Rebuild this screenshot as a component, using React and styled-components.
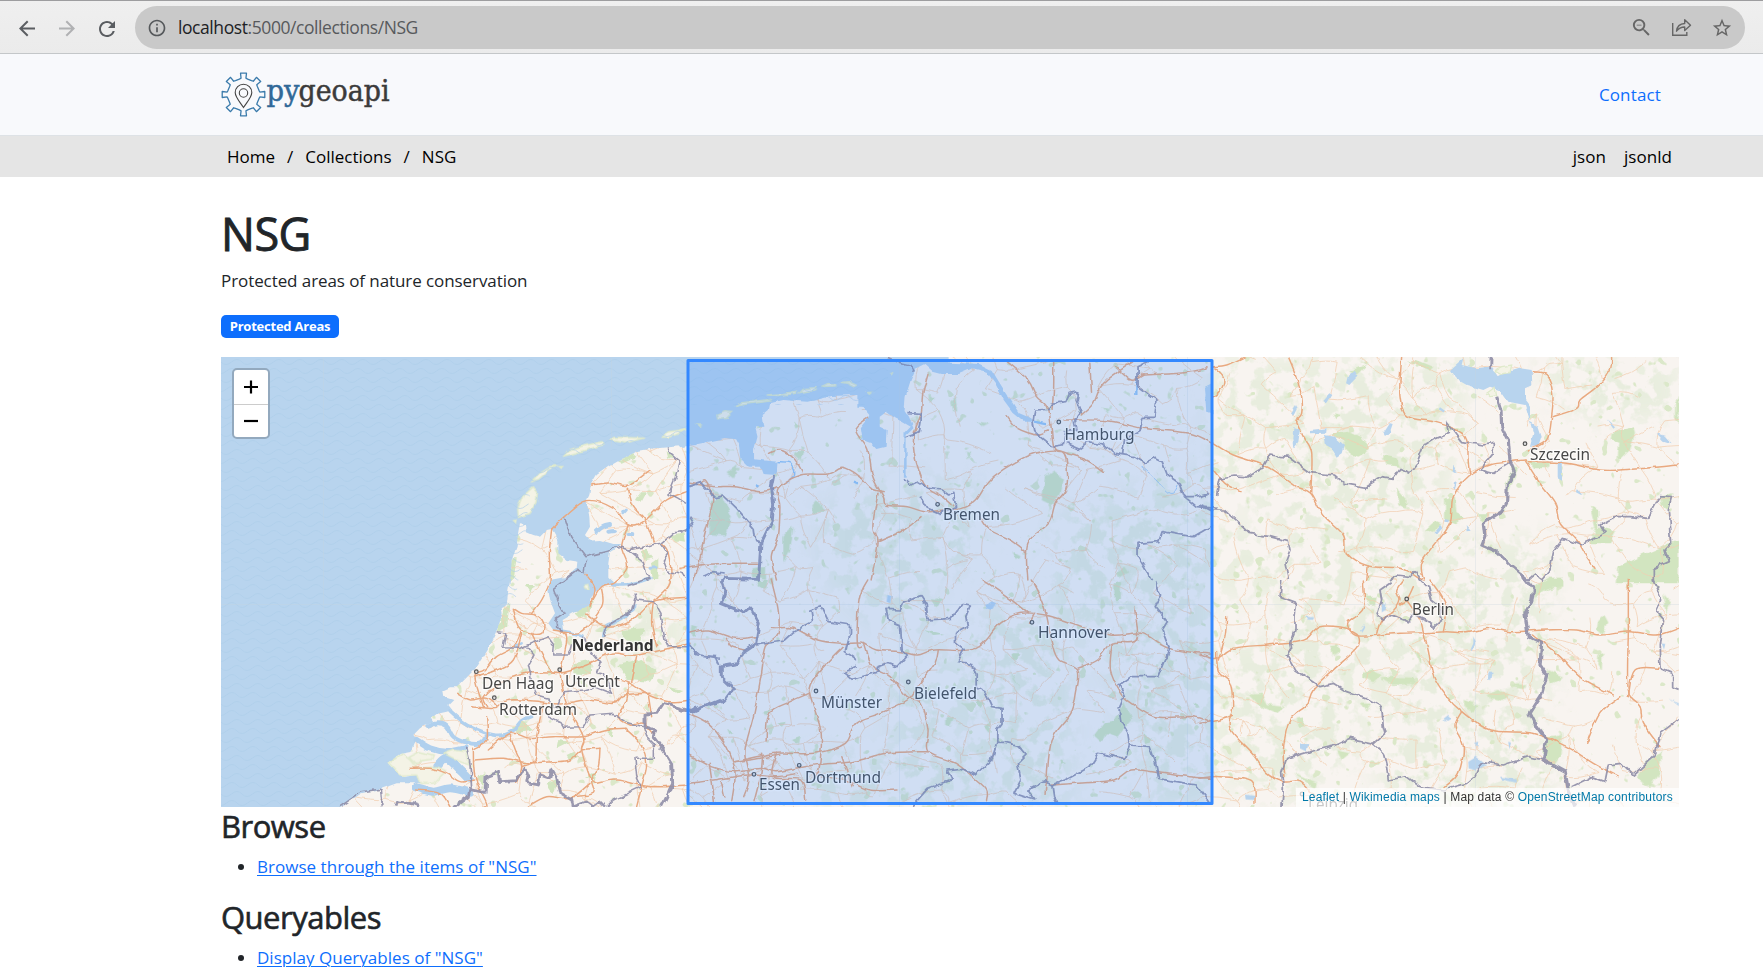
import React from "react";
import styled, { createGlobalStyle } from "styled-components";
import {
  MdArrowBack,
  MdArrowForward,
  MdRefresh,
  MdInfoOutline,
  MdZoomOut,
  MdStarBorder,
} from "react-icons/md";

const GlobalStyle = createGlobalStyle`
  *, *::before, *::after { box-sizing: border-box; }
  html, body { margin: 0; height: 100%; overflow: hidden; }
  body {
    background: #fff;
    color: #212529;
    font-family: "Open Sans", "Noto Sans", sans-serif;
    font-size: 17px;
    line-height: 27px;
  }
`;

/* ---------- browser bar ---------- */

const Toolbar = styled.div`
  display: flex;
  align-items: center;
  height: 54px;
  padding: 1px 18px 0 15px;
  background: linear-gradient(#efefef, #ebebeb);
  border-top: 1px solid #9d9d9f;
  border-bottom: 1px solid #c4c7c9;
`;

const NavButton = styled.span`
  display: flex;
  width: 24px;
  height: 24px;
  margin-right: 16px;
  color: ${(p) => (p.$disabled ? "#b0b1b3" : "#5a5d61")};
`;

const AddressBar = styled.div`
  display: flex;
  flex: 1;
  align-items: center;
  height: 43px;
  padding: 0 12px 0 12px;
  background: #c9c9c9;
  border-radius: 22px;
  color: #55585b;
`;

const Url = styled.span`
  flex: 1;
  margin: -1px 0 0 11px;
  font-size: 17.5px;
  letter-spacing: -0.42px;
  color: #57595c;
  b { font-weight: 400; color: #202124; }
`;

const BarIcon = styled.span`
  display: flex;
  margin-left: ${(p) => p.$gap || 0}px;
  color: #666;
`;

/* ---------- site header ---------- */

const Header = styled.header`
  height: 82px;
  background: #f8f9fc;
  border-bottom: 1px solid #dee2e6;
`;

const Container = styled.div`
  width: 1458px;
  height: ${(p) => (p.$fill ? "100%" : "auto")};
  margin: 0 auto 0 221px;
  display: ${(p) => (p.$row ? "flex" : "block")};
  align-items: center;
  justify-content: space-between;
  padding: ${(p) => p.$pad || 0};
`;

const ContactLink = styled.a`
  color: #0d6efd;
  letter-spacing: 0.15px;
`;

const CrumbBar = styled.div`
  height: 41px;
  background: #e5e5e5;
  color: #000;
`;

const Crumbs = styled.nav`
  display: flex;
  gap: 12px;
  letter-spacing: 0;
`;

const Formats = styled.nav`
  display: flex;
  gap: 18px;
  letter-spacing: 0.05px;
`;

/* ---------- page body ---------- */

const Title = styled.h1`
  margin: 30px 0 0;
  font-size: 45px;
  line-height: 54px;
  font-weight: 500;
  letter-spacing: -0.5px;
  -webkit-text-stroke: 0.9px currentColor;
`;

const Description = styled.p`
  margin: 6px 0 0;
  letter-spacing: -0.08px;
`;

const Badge = styled.span`
  display: flex;
  align-items: center;
  justify-content: center;
  width: 118px;
  height: 23px;
  margin: 21px 0 19px;
  border-radius: 5px;
  background: #0d6efd;
  color: #fff;
  font-size: 13px;
  font-weight: 700;
  letter-spacing: -0.22px;
`;

const Heading = styled.h3`
  margin: ${(p) => p.$top}px 0 0;
  height: 38px;
  font-size: 31px;
  line-height: 38px;
  font-weight: 500;
  letter-spacing: -0.5px;
  -webkit-text-stroke: 0.6px currentColor;
`;

const LinkList = styled.ul`
  margin: 8px 0 0;
  padding-left: 36px;
  height: 27px;
`;

const ItemLink = styled.a`
  color: #0d6efd;
  text-decoration: underline;
  text-decoration-thickness: 1px;
  text-underline-offset: 2px;
  letter-spacing: 0.03px;
`;

/* ---------- map ---------- */

const MapFrame = styled.div`
  position: relative;
  width: 1458px;
  height: 450px;
  overflow: hidden;
  svg { display: block; }
`;

const ZoomControl = styled.div`
  position: absolute;
  left: 11px;
  top: 11px;
  display: flex;
  flex-direction: column;
  width: 38px;
  border: 2px solid #93a9be;
  border-radius: 5px;
  background: #fff;
`;

const ZoomKey = styled.span`
  display: flex;
  align-items: center;
  justify-content: center;
  height: 34px;
  & + & { height: 33px; border-top: 1px solid #ccc; }
`;

const Attribution = styled.div`
  position: absolute;
  right: 0;
  bottom: 0;
  width: 383px;
  height: 19px;
  padding-left: 6px;
  background: rgba(255, 255, 255, 0.7);
  color: #333;
  font: 12px/18px "Liberation Sans", Arial, sans-serif;
  letter-spacing: 0.17px;
  white-space: nowrap;
  a { color: #0078a8; }
`;

/* Smooth line through a list of "x,y" points. */
const curve = (text) => {
  const p = text.trim().split(/\s+/).map((s) => s.split(",").map(Number));
  let d = `M${p[0]}`;
  for (let i = 0; i < p.length - 1; i++) {
    const a = p[i - 1] || p[i];
    const b = p[i];
    const c = p[i + 1];
    const e = p[i + 2] || c;
    d += `C${b[0] + (c[0] - a[0]) / 6},${b[1] + (c[1] - a[1]) / 6} ${c[0] - (e[0] - b[0]) / 6},${c[1] - (e[1] - b[1]) / 6} ${c}`;
  }
  return d;
};

const SHEETS = {
  west: "translate(-1 -7) scale(.33333)",
  north: "translate(459 -7) scale(.3444 .33333)",
  south: "translate(459 223) scale(.3444 .33333)",
  northEast: "translate(979 -7) scale(.33333)",
  southEast: "translate(979 223) scale(.33333)",
};

const SEA = {
  west: [
    "-20,-10 1430,-10 1430,285 1345,292 1290,296 1255,302 1210,325 1165,350 1130,375 1112,405 1108,435 1100,452 1108,500 1110,530 1095,555 1110,572 1140,570 1180,582 1205,582 1170,605 1165,640 1165,680 1190,705 1150,705 1115,740 1110,765 1060,790 1025,810 1030,845 1000,840 985,820 1005,790 990,750 985,720 990,690 1040,680 1070,655 1072,635 1040,630 1015,610 1015,570 995,537 980,540 960,560 940,555 917,545 915,522 900,520 893,560 890,590 875,630 872,680 865,720 860,765 845,775 848,790 838,820 825,850 800,900 768,950 735,985 708,1012 690,1012 667,1022 670,1040 700,1050 685,1065 697,1080 680,1085 650,1092 632,1105 640,1117 600,1135 580,1155 590,1167 575,1205 540,1212 503,1238 535,1272 555,1280 590,1275 600,1300 530,1300 480,1318 425,1330 362,1370 350,1400 -20,1400",
  ],
  north: [
    "0,-10 780,-10 780,38 870,42 905,60 935,110 960,150 985,190 1020,205 1025,215 1000,215 965,185 940,150 915,100 890,65 850,55 810,72 760,72 735,65 710,42 685,55 670,90 655,140 652,180 665,200 678,235 658,255 658,380 650,380 652,250 670,230 645,215 625,205 600,185 580,200 580,230 600,240 597,290 570,297 555,280 530,270 525,235 540,215 550,195 530,170 515,170 515,135 440,138 370,155 300,150 262,160 258,180 240,195 245,230 218,232 225,260 215,300 215,328 283,335 280,375 240,372 232,350 200,350 175,325 172,290 160,268 130,264 60,280 0,292",
    "1532,110 1545,100 1545,190 1528,185 1525,145",
  ],
  south: ["602,45 614,48 610,70 600,65", "890,75 905,64 918,70 905,90 888,85"],
  northEast: [
    "750,60 790,25 785,45 830,55 870,50 890,75 925,65 960,55 995,60 997,105 975,115 975,150 990,170 990,215 1015,230 1025,260 1015,290 990,290 1000,250 975,165 925,155 900,120 870,110 850,120 800,105 765,85",
    "372,255 405,260 432,285 425,310 410,320 395,295 378,285", "280,235 300,240 295,275 280,295 277,265",
    "443,80 465,62 472,80 448,105 438,100", "370,150 388,130 397,135 382,158", "272,185 285,165 290,175 280,195",
    "550,250 570,220 578,222 570,245 555,258", "1073,340 1085,332 1086,392 1073,385", "1130,418 1150,430 1145,434 1128,425",
    "760,345 768,350 766,370 758,365", "762,395 770,400 764,420 760,412", "330,240 380,235 378,248 330,250", "720,172 735,182 730,187 716,178",
    "1220,208 1245,232 1240,236", "1370,250 1395,258 1415,280 1390,272", "735,508 748,510 745,520 733,518", "700,550 720,525 726,532 712,550", "797,525 812,542 800,544",
    "15,110 35,100 38,190 20,185",
  ],
  southEast: [
    "545,75 560,68 556,90 545,97", "820,170 828,185 818,212 812,208 820,190", "865,275 878,275 874,300 864,298", "320,110 340,112 335,120 322,118",
    "480,150 490,136 493,142 484,158", "135,643 165,648 162,660 137,658", "730,420 745,408 752,416 738,424", "300,490 325,492 320,515 300,505", "805,545 830,530 858,555 830,572 806,565",
    "925,485 933,488 928,508", "900,590 950,598 950,608 905,598", "1385,190 1396,192 1392,208", "1408,355 1436,372 1436,378", "822,488 835,485 832,500",
  ],
};

const ISLANDS = {
  west: [
    "937,410 952,430 948,460 930,490 895,502 893,475 910,435", "936,392 960,368 990,350 1012,347 985,362 955,388",
    "1032,318 1045,300 1100,285 1145,275 1148,285 1070,308", "1172,270 1185,262 1275,264 1215,279", "1327,262 1340,246 1398,238 1370,253 1345,262",
    "878,512 888,510 886,520", "1092,705 1103,703 1107,717 1095,715", "1018,350 1030,350 1024,355",
    "567,1222 600,1205 640,1215 635,1228 605,1232 590,1245", "672,1210 700,1200 740,1205 748,1245 720,1235", "505,1238 545,1212 570,1230 590,1255 650,1250 680,1262 640,1300 600,1300 590,1275 540,1275",
  ],
  north: [
    "107,195 130,185 153,187 135,205 110,210", "160,170 180,158 265,148 265,153 190,163", "252,135 300,130 340,124 338,130 290,137", "348,128 360,115 395,113 395,119",
    "410,110 430,100 450,102 448,108", "465,97 490,95 512,106 508,112 485,100", "50,222 62,222 60,232", "545,128 558,126 550,133", "0,240 15,236 0,246", "610,70 617,68 615,74",
  ],
  northEast: ["885,60 905,50 935,45 930,68 905,72", "860,130 885,112 890,138 870,140"],
};

const CHANNELS = [
  ["625,1130 650,1120 680,1128 700,1160 740,1178 780,1180 800,1158", 4],
  ["690,1082 725,1112 770,1138 830,1156 875,1145 905,1112 935,1100", 3.6],
  ["590,1170 630,1195 680,1205 735,1195", 6],
  ["650,1250 680,1225 720,1260 745,1285", 9],
  ["590,1312 640,1325 690,1315 750,1328", 8],
  ["1180,702 1240,700 1290,684", 3.5],
  ["1150,858 1160,828 1205,808 1245,770", 3],
  ["1020,842 1055,848 1090,860", 3],
  ["1130,545 1150,530 1170,525", 4],
  ["1165,545 1185,543", 4], ["1225,552 1240,552", 4], ["1208,488 1216,480", 3],
  ["1290,655 1308,653", 3], ["885,888 905,880", 2.5],
];

const PARKS = {
  west: [
    "875,625 887,625 878,690 865,700", "850,780 868,760 862,830 830,845", "895,500 893,475 915,430 910,480", "1040,310 1130,278 1145,280 1060,308",
    "1060,790 1120,750 1115,775 1075,805", "1258,600 1280,600 1300,625 1275,630", "1260,430 1280,430 1265,458 1248,450", "1205,840 1270,835 1258,885 1220,870",
    "1195,945 1265,930 1310,965 1290,995 1225,990", "1060,940 1110,930 1110,975 1060,970", "875,1130 910,1112 945,1140 900,1148", "1000,865 1020,860 1030,890 1005,905",
    "1290,640 1315,620 1315,690 1300,690", "915,705 945,705 930,730", "770,1290 795,1270 790,1310", "1160,1130 1180,1135 1175,1165 1160,1150", "1345,560 1390,550 1395,575 1365,570",
    "1015,1170 1050,1175 1010,1195", "1040,1215 1060,1205 1075,1220 1050,1232", "980,1300 1015,1290 1000,1330", "1340,300 1360,320 1345,330", "1190,335 1240,310 1250,318 1205,338",
    "1095,1280 1130,1265 1125,1290", "1340,1010 1390,1020 1370,1030",
  ],
  north: [
    "90,450 120,430 150,500 130,560 85,555", "1060,380 1085,362 1115,385 1105,430 1080,465 1050,450", "205,655 250,650 250,690 210,680", "385,465 400,448 420,485 385,490",
    "300,560 330,530 320,600 300,640", "330,310 360,290 350,330", "1225,172 1250,182 1240,190", "725,130 740,145 725,160", "785,155 800,140 805,185 790,180", "830,305 845,310 835,325",
    "1265,665 1290,650 1305,670 1275,685", "330,215 350,230 335,235", "135,370 165,345 155,385", "965,605 990,620 975,630", "455,205 475,212 460,215", "865,215 895,220 880,228",
  ],
  south: [
    "1200,470 1230,430 1260,425 1290,365 1310,420 1270,470 1240,460 1220,490", "770,410 795,415 785,440 770,435", "280,430 310,425 295,440", "955,265 990,330 970,300",
    "730,55 765,60 745,78", "705,150 765,165 735,168", "855,355 885,370 870,385", "962,220 985,220 980,240 965,238", "1260,10 1280,5 1280,60 1262,60", "325,480 350,470 345,495",
    "30,135 48,140 45,175 28,160", "885,440 905,430 900,460", "1490,370 1500,365 1508,380", "240,395 265,390 250,410", "685,560 710,558 700,572", "1345,460 1370,480 1350,490", "1100,540 1120,550 1105,555",
    "140,450 160,455 145,463", "220,0 255,0 250,30 230,20",
  ],
  northEast: [
    "400,250 445,245 480,260 500,280 510,300 475,320 460,315 440,300 430,275", "548,315 590,325 600,350 560,345", "590,415 620,450 618,480 595,465", "735,450 765,440 770,490 790,500 765,520 735,510",
    "675,540 705,512 720,520 700,550", "1235,245 1300,232 1305,255 1290,300 1260,330 1250,320 1255,275 1232,268", "1170,470 1195,480 1195,530 1250,545 1230,580 1170,580 1185,530", "985,335 1050,340 1045,355 1000,355",
    "1255,650 1340,610 1436,570 1436,700 1250,700", "1380,440 1420,430 1410,480 1385,460", "445,65 480,50 500,45 470,75", "915,400 945,350 955,350 925,430", "833,490 870,490 850,520",
    "620,32 650,30 700,50 690,62", "1425,160 1436,140 1436,220 1425,210", "400,190 425,195 410,205",
  ],
  southEast: [
    "490,275 515,268 545,285 520,310 490,295", "540,295 575,290 640,293 640,312 575,315", "390,195 412,192 420,215 400,228", "150,345 185,340 200,375 255,380 230,400 175,375", "1000,20 1050,-10 1090,-10 1090,20 1040,30 1005,50",
    "1040,470 1090,462 1080,530 1060,560 1030,530", "1330,560 1385,510 1380,580 1350,625 1310,590", "1195,120 1210,108 1222,130 1205,165 1190,150", "1195,225 1208,222 1205,270 1192,250", "860,345 895,330 928,345 900,365 870,360",
    "790,360 840,375 820,395 795,380", "290,415 310,412 310,440 295,440", "410,510 450,520 425,540", "1040,270 1090,290 1050,310", "500,50 530,50 525,80 505,80", "930,315 980,312 970,325", "485,370 510,370 500,395",
    "100,90 118,88 110,105", "645,215 662,220 660,250", "1390,40 1415,70 1400,100", "280,580 350,610 345,625",
  ],
};

const WOODS = [
  "600,150 690,120 760,130 760,200 700,230 720,290 640,260 600,210", "835,160 990,110 991,447 930,447 880,300 830,240", "760,250 850,260 850,447 760,447 740,330",
  "580,400 760,390 760,450 580,450", "992,0 1250,0 1230,120 1200,200 1080,190 992,120", "1310,0 1458,0 1458,60 1390,70 1340,50", "1060,190 1330,180 1330,450 1160,450 1150,330 1060,300",
  "992,150 1060,190 1060,240 1000,240", "995,280 1140,290 1140,400 1070,450 1000,420", "380,250 465,230 465,320 400,330", "660,330 730,290 740,370 680,400",
];

const BORDERS = {
  west: [
    [3, "795,1328 798,1280 838,1265 842,1295 890,1292 912,1255 925,1270 920,1298 955,1305 960,1275 990,1285 995,1260 1010,1285 1020,1330 1055,1350 1060,1375"],
    [3, "700,1372 745,1340 750,1318 795,1328"], [3, "1325,1370 1345,1330 1358,1300 1355,1240 1330,1200 1300,1160 1305,1140 1275,1130 1275,1092 1310,1090 1330,1060 1415,1085 1440,1075 1500,1050"],
    [3, "525,1370 530,1355 580,1362 600,1370"], [2.4, "480,1318 485,1372"], [2.4, "1060,1370 1100,1355 1120,1370 1140,1355 1155,1370"],
    [1.6, "360,1370 425,1325 480,1318"], [1.6, "1345,292 1350,310 1378,335 1365,385 1347,430 1375,445 1398,460"],
    [1.6, "1190,587 1225,600 1250,595 1325,580 1360,550 1400,540 1418,515"], [1.6, "1220,595 1270,635 1280,670 1290,685 1220,708"], [1.6, "1325,580 1345,610 1330,630 1342,662 1398,678"],
    [1.6, "1033,500 1052,560 1098,620 1170,602 1190,587"], [1.6, "1098,632 1092,665 1075,658 1000,715 1015,755 1035,790 1008,808 1010,830 1025,845"],
    [1.6, "830,845 858,850 848,893 900,895 935,880 985,860 1000,880 998,915 1045,915 1055,880"], [1.6, "920,890 942,915 925,945 935,990 950,1035 985,1045 1010,1075 1030,1025 1090,1020 1125,1010 1175,1030 1150,970 1130,965 1140,940 1115,910 1090,860"],
    [1.6, "1245,730 1250,750 1300,755 1320,790 1335,870 1345,890 1410,890 1440,915 1500,925"], [1.6, "1245,740 1235,780 1160,830 1150,860"],
    [1.6, "970,1090 1020,1115 1030,1132 1090,1130 1110,1095 1180,1090 1215,1115 1270,1130 1280,1160 1300,1180 1300,1225 1245,1225 1250,1280 1265,1310 1180,1350 1160,1370"],
    [1.8, "740,1190 750,1240 755,1315"],
  ],
  north: [
    [3, "272,375 265,410 272,460 268,510 235,580 228,688 130,685 120,700"], [1.8, "25,410 60,398 100,440 125,435 165,475 215,535 220,575 235,580"], [1.8, "28,500 40,520 28,535 0,550"],
    [1.8, "605,22 640,38 670,45 680,65"], [1.8, "660,188 700,190 700,215 695,245 655,260"], [1.8, "650,385 670,405 690,395 720,415 760,420 780,435 795,430 800,470 755,490 720,475 700,440"],
    [1.8, "1025,215 1030,180 1070,178 1080,160 1120,155 1130,130 1155,125 1150,150 1165,190 1145,215 1150,240 1120,245 1110,285 1080,290 1050,265 1030,245 1025,215"],
    [1.8, "1120,280 1160,298 1185,278 1230,285 1260,310 1320,320 1350,340 1380,325 1400,335 1415,375 1450,400 1465,440 1490,440 1535,430"], [1.8, "1285,315 1290,270 1335,245 1345,205 1375,205 1382,150 1330,110 1330,50 1370,30"],
    [1.8, "1465,440 1500,470 1560,475"], [1.8, "1540,530 1490,560 1400,545 1390,575 1330,580 1330,620 1370,690"], [1.8, "65,680 90,668 130,672"],
  ],
  south: [
    [3, "120,0 130,35 120,70 185,98 205,80 230,130 220,190 185,215 170,250 120,260 120,290 155,325 130,360 80,375 30,395 0,388"],
    [1.8, "25,190 50,225 105,230 115,255"], [1.8, "220,195 300,183 330,155 385,125 380,90 410,80 430,125 495,135 495,160 480,215 515,240"],
    [1.8, "510,258 475,275 500,298 545,285 580,275 570,262 600,250 630,260 660,225 645,210 640,135 605,120 598,88 640,90 650,65 700,50 715,75 720,120 790,115 820,70 843,75 830,110 835,140 800,160 800,185 825,205 805,245 845,250 860,280 860,320 885,335 905,380 935,385 935,430 920,450 920,490"],
    [1.8, "1380,0 1395,50 1380,80 1415,125 1400,150 1420,205 1410,240 1390,290 1310,290 1275,315 1290,350 1275,385 1280,425 1300,460 1305,495 1290,535 1215,520 1190,560 1120,600 1080,615 1060,605 1010,630 1030,660 970,640 990,600 980,550 1005,525 985,500 945,490 920,490 905,540 860,585 820,565 775,570 790,600 720,625 690,660 675,680"],
    [1.8, "1305,495 1365,500 1380,545 1390,595 1440,605 1500,615 1540,670"], [1.8, "1080,615 1085,650 1095,670"],
  ],
  northEast: [
    [3, "873,20 872,55"], [3.3, "890,140 903,180 905,230 925,270 930,330 943,365 922,405 920,455 905,485 850,520 855,560 845,585 890,605 930,645 985,690"], [1.8, "985,690 1005,675 1025,690 1050,660 1060,605 1090,565 1140,585 1215,550 1200,525 1245,500 1290,500 1345,505 1380,440 1418,443 1408,480 1415,580 1395,600 1405,635 1360,655 1360,690"],
    [1.8, "50,435 60,385 100,378 140,380 190,350 210,315 265,322 330,368 400,375 430,400 495,412 545,380 580,385 600,355 625,372 650,340 670,290 710,265 745,250 740,215 755,235 785,275 850,285 880,280 880,310 840,360 880,370 935,335"],
    [1.8, "40,480 75,480 120,520 150,550 210,560 265,575 270,600 255,640 265,690"], [1.8, "570,690 590,675 630,680 645,665 660,690"], [1.8, "0,440 25,430"], [1.8, "0,465 40,485"],
  ],
  southEast: [
    [3.4, "970,-10 1000,30 995,65 975,100 985,170 1025,190 1020,255 1040,285 1025,345 990,400 1010,440 1040,480 1030,540 1095,575 1105,630 1125,680"],
    [1.8, "245,0 240,50 290,68 285,110 285,150 272,190 275,205 262,230 285,270 330,300 360,320 400,310 440,335 505,358 545,380 550,440 555,460 520,490 450,475 400,498 330,515 260,535 245,580 250,625 245,690"],
    [2, "575,5 540,30 545,60 530,110 550,120 575,105 625,125 640,105 695,130 700,145 730,120 720,80 695,60 685,20 660,-5"], [1.8, "520,490 550,520 560,560 565,600 620,590 660,620 730,630 800,610 825,590 845,545 910,555 985,530 1030,540"],
    [1.8, "1360,0 1385,60 1370,95 1388,115 1378,200 1380,265 1415,280 1415,320 1436,328"], [1.8, "1115,620 1175,590 1215,605 1225,555 1265,550 1300,585 1365,525 1380,460 1436,418"],
  ],
};

const ROADS = {
  west: [
    "995,537 1033,500 1100,452 1180,475 1225,525 1270,515 1340,450 1400,425", "1225,525 1205,590 1222,650 1185,695 1145,710 1110,765", "1225,415 1240,470 1275,510 1300,575", "1115,405 1170,398 1225,405 1290,360",
    "995,537 988,610 990,690 965,750 935,790", "880,775 895,830 925,850 965,850 970,820 945,795 905,790 880,775", "905,840 880,890 830,920 795,960 765,980 790,1070", "935,850 970,920 990,960 1020,970 1100,945 1175,910 1250,915 1410,880",
    "765,980 830,960 880,930 905,850", "1020,845 1085,845 1145,770 1145,720", "1020,970 1040,860 1000,840", "1300,755 1350,700 1345,610 1325,580", "1300,755 1295,820 1310,890", "1100,795 1160,830 1230,815 1300,755 1400,742",
    "800,1070 790,1040 840,1000 920,970 1010,970", "710,1030 750,1050 800,1045 830,1075 755,1070", "830,1070 870,1050 960,1055 1020,1062 1100,1050 1180,1060 1215,1035 1290,1030", "970,1060 950,1160 945,1230 905,1250",
    "1020,970 1040,1060 1090,1160 1085,1200 1110,1280 1130,1300", "805,1200 870,1150 930,1165 1000,1160 1090,1160 1150,1140 1215,1135", "870,1155 890,1210 905,1250 890,1300", "760,1195 765,1280 800,1360 790,1372",
    "800,1100 800,1170 765,1195", "765,1230 850,1225 920,1238 1000,1235 1050,1230 1085,1200 1140,1195", "1140,1195 1135,1250 1115,1290 1120,1330 1060,1340", "1130,1300 1190,1290 1290,1310 1400,1305",
    "1175,985 1230,1000 1285,1035 1350,1055 1410,1050", "1225,1000 1220,1050 1195,1100 1230,1125 1270,1120 1300,1150", "1250,920 1235,1000", "1285,1035 1295,1100", "570,1255 630,1255 680,1270 720,1295 760,1290",
    "690,1370 660,1330 590,1320", "920,1372 980,1340 1050,1345 1110,1300", "1215,1135 1260,1180 1280,1240 1265,1310 1250,1370", "1110,770 1125,720 1110,690 1095,670",
  ],
  north: [
    "40,690 55,640 70,560 95,450 75,395 60,400", "0,655 60,645 140,640 225,640", "280,690 265,620 285,560 290,470 285,415 350,375 430,372 470,352 520,380 555,415 590,425", "260,310 290,300 330,325 355,365",
    "28,400 100,410 160,410 235,425 285,410", "545,205 510,240 545,300 560,380 590,440 600,465 660,470 710,485 765,480 820,475 860,450 900,390 960,345 1030,310 1110,305 1125,370 1120,420 1090,460 1070,520 1010,580 1010,690",
    "575,430 560,530 575,575 555,690", "575,575 650,540 700,500", "720,70 705,130 700,190 680,250 680,310 700,380 715,410 770,445 795,470", "870,500 900,540 960,570 1005,605", "950,35 1010,90 1035,140 1070,180 1085,290 1110,305",
    "1085,35 1085,110 1080,180", "1315,35 1230,100 1200,160 1165,195", "1115,210 1240,212 1345,235 1480,250 1545,280", "1190,40 1195,130", "950,200 980,235 1040,255 1070,240", "1110,305 1180,330 1230,365",
    "1340,75 1450,70 1510,60 1530,50", "1265,50 1310,90 1345,75",
  ],
  south: [
    "545,0 520,60 515,190 530,200", "265,0 285,90 285,160 250,200 235,290 215,400 190,500 190,540", "265,145 330,145 400,180 470,190 530,190 570,210 640,215 690,225 740,210 860,205 930,130 990,100 1060,105 1140,130 1250,165 1340,160 1420,205 1540,222",
    "475,200 400,280 375,325 385,370 410,460 405,560 395,590", "535,190 560,260 610,290 660,350 700,370 720,450 720,515 800,550 850,590 890,630 890,665", "750,210 740,250 690,320 660,360 580,400 510,430 480,490 390,520 280,520 160,545",
    "25,400 80,430 130,490 155,550 160,590 150,665", "25,525 90,560 160,575 240,565 280,575 390,555 500,545 600,520 720,515", "30,610 100,600 200,585 280,590 340,580", "155,545 200,540 290,525", "85,550 95,620 100,665",
    "190,540 200,600 185,650", "280,520 270,590 350,600 365,660", "250,480 260,400 320,365 375,340", "410,590 480,600 550,630 630,630", "240,520 235,580 215,665", "470,530 490,590 500,620", "120,605 130,650",
    "880,0 950,50 1010,100", "1020,0 1045,50 1065,110 1080,190 1100,240 1155,268 1150,340 1135,400 1080,480 1065,600 1060,640", "1155,265 1210,240 1255,190 1325,180 1320,85", "1255,190 1250,270 1280,340 1310,370 1380,410 1490,410 1540,425",
    "1080,615 1150,610 1260,600 1310,570 1400,580 1480,590 1540,595", "25,160 80,150 160,175 220,170", "135,175 150,200 190,210", "1030,100 1015,130",
  ],
  northEast: [
    "265,20 285,70 305,140 305,190 290,215 310,260 335,310 332,430", "40,280 100,315 190,345 240,375 290,410 332,430 370,495 430,555 440,610 505,648 600,655 665,690", "605,20 600,140 625,200 700,215 770,240 800,270 805,340 810,375",
    "40,50 80,45 135,20", "40,50 70,80 65,115 40,140", "935,335 870,345 810,375 760,440 750,520 700,590 665,640 670,690", "975,330 930,335", "1235,20 1230,60 1190,110 1140,150 1130,175 1060,200", "1000,65 1040,75 1058,130 1055,200 1040,270 985,300",
    "975,330 1020,400 1065,460 1080,520 1130,570 1160,620 1185,655", "985,335 1100,340 1200,360 1290,358 1436,345", "40,360 75,400 120,425", "505,648 500,690",
  ],
  southEast: [
    "0,225 50,235 100,205 200,195 270,190 320,175 360,140 440,145 475,168 600,160 680,158 740,155 800,158 870,145 930,155 1040,150 1130,150 1200,165 1290,155 1370,165 1436,145", "490,0 490,85 445,125 450,150 475,168 470,205 400,270 340,330 320,375 270,420 250,510 255,590",
    "670,155 685,210 700,285 740,350 785,395 870,450 1000,460 1100,500 1180,550 1255,590", "785,395 765,440 790,500 775,580 735,620", "50,215 55,275 90,310 98,380 90,445 160,525 200,580 250,605 300,605 345,650", "0,595 60,590 155,605 165,670", "0,430 60,420 100,405",
    "530,160 545,120 580,95 600,60 590,30 610,0", "730,155 740,90 725,50 690,0", "620,60 660,120 670,155", "640,20 620,60 600,75", "80,110 75,170 55,240",
    "1285,0 1285,150 1285,330 1320,380 1330,430 1380,500", "1260,350 1200,400 1160,490", "1285,350 1305,270 1380,265", "1000,165 1080,230 1145,295 1240,345",
  ],
};

/* Deterministic web of local roads laid over the land. */
const localRoads = () => {
  let seed = 7;
  const rnd = () => {
    seed = (seed * 16807) % 2147483647;
    return seed / 2147483647;
  };
  const step = 25;
  const cols = Math.ceil(1458 / step) + 2;
  const rows = Math.ceil(450 / step) + 2;
  const pts = Array.from({ length: rows }, (_, r) =>
    Array.from({ length: cols }, (_, c) => [
      (c - 0.5 + (r % 2) * 0.5) * step + (rnd() - 0.5) * step * 0.85,
      (r - 0.5) * step + (rnd() - 0.5) * step * 0.85,
    ])
  );
  let d = "";
  const link = (a, b) => {
    const mx = (a[0] + b[0]) / 2 + (rnd() - 0.5) * 12;
    const my = (a[1] + b[1]) / 2 + (rnd() - 0.5) * 12;
    d += `M${a[0].toFixed(1)},${a[1].toFixed(1)}Q${mx.toFixed(1)},${my.toFixed(1)} ${b[0].toFixed(1)},${b[1].toFixed(1)}`;
  };
  for (let r = 0; r < rows - 1; r++) {
    for (let c = 0; c < cols - 1; c++) {
      const density = c * step < 620 ? 0.74 : 0.5;
      if (rnd() < density) link(pts[r][c], pts[r][c + 1]);
      if (rnd() < density) link(pts[r][c], pts[r + 1][c]);
      if (rnd() < density * 0.2) link(pts[r][c], pts[r + 1][c + 1]);
    }
  }
  return d;
};

const LOCAL_ROADS = localRoads();

const CITIES = [
  ["Den Haag", 261, 332, 72, 255.3, 314.7],
  ["Utrecht", 344, 329.5, 55, 338.7, 312.7],
  ["Rotterdam", 278, 358, 78, 273.3, 340.7],
  ["Hamburg", 843.5, 83, 70, 837.8, 65],
  ["Bremen", 722, 162.5, 57, 716.6, 147.3],
  ["Hannover", 817, 281, 72, 811, 265.3],
  ["Bielefeld", 693, 342, 63, 687.3, 325],
  ["Münster", 600, 351, 61, 595, 334],
  ["Dortmund", 584, 425.5, 76, 578.2, 408.3],
  ["Essen", 538, 433, 41, 533, 417.3],
  ["Szczecin", 1309, 103, 60, 1304, 86.7],
  ["Berlin", 1191, 258, 42, 1185.7, 242],
  ["Leipzig", 1087, 453, 50, 1081, 437],
];

function Polygons({ groups, ...rest }) {
  return Object.entries(groups).map(([sheet, list]) => (
    <g key={sheet} transform={SHEETS[sheet]} {...rest}>
      {list.map((points, i) => <polygon key={i} points={points} />)}
    </g>
  ));
}

function RegionMap() {
  return (
    <svg width="1458" height="450" viewBox="0 0 1458 450">
      <defs>
        <pattern id="waves" width="21" height="18" patternUnits="userSpaceOnUse">
          <path d="M0 5q5 5 10.500 0t10.500 0M-5 14q5 5 10.500 0t10.500 0t10.500 0" fill="none" stroke="#adcde9" strokeWidth="1" />
        </pattern>
        <filter id="rough" filterUnits="userSpaceOnUse" x="-10" y="-10" width="1478" height="470">
          <feTurbulence type="fractalNoise" baseFrequency=".11" numOctaves="2" seed="4" />
          <feDisplacementMap in="SourceGraphic" scale="6" xChannelSelector="R" yChannelSelector="G" />
          <feGaussianBlur stdDeviation=".35" />
        </filter>
        <filter id="coast" filterUnits="userSpaceOnUse" x="-10" y="-10" width="1478" height="470">
          <feTurbulence type="fractalNoise" baseFrequency=".1" numOctaves="2" seed="9" />
          <feDisplacementMap in="SourceGraphic" scale="4" xChannelSelector="R" yChannelSelector="G" />
          <feGaussianBlur stdDeviation=".35" />
        </filter>
        <filter id="woods" filterUnits="userSpaceOnUse" x="0" y="0" width="1458" height="450" colorInterpolationFilters="sRGB">
          <feTurbulence type="fractalNoise" baseFrequency=".06" numOctaves="4" seed="12" />
          <feColorMatrix values="0 0 0 0 .91  0 0 0 0 .93  0 0 0 0 .87  9 0 0 0 -4.300" result="n" />
          <feGaussianBlur in="SourceGraphic" stdDeviation="12" result="s" />
          <feComposite in="n" in2="s" operator="in" />
        </filter>
        <filter id="groves" filterUnits="userSpaceOnUse" x="0" y="0" width="1458" height="450" colorInterpolationFilters="sRGB">
          <feTurbulence type="fractalNoise" baseFrequency=".09" numOctaves="2" seed="31" />
          <feColorMatrix values="0 0 0 0 .86  0 0 0 0 .91  0 0 0 0 .79  16 0 0 0 -11" />
        </filter>
      </defs>
      <rect width="1458" height="450" fill="#f8f4f0" />
      <g filter="url(#woods)">
        {WOODS.map((points) => <polygon key={points} points={points} />)}
      </g>
      <rect width="1458" height="450" filter="url(#groves)" />
      <g filter="url(#rough)"><Polygons groups={PARKS} fill="#d2e5c0" /></g>
      <g filter="url(#coast)">
        <path d={LOCAL_ROADS} fill="none" stroke="#f2cfb2" strokeWidth="1" opacity=".75" />
      </g>
      <g filter="url(#coast)">
        <Polygons groups={SEA} fill="#b8d4ee" />
        <g transform={SHEETS.west} fill="none" stroke="#b0d0ee" strokeLinecap="round">
          {CHANNELS.map(([pts, w]) => <path key={pts} d={curve(pts)} strokeWidth={w * 3} />)}
        </g>
        <g transform={SHEETS.north} fill="none" stroke="#9ac6f2" strokeWidth="4">
          <path d={curve("283,335 320,340 330,375 310,395")} />
          <path strokeWidth="2.500" d={curve("1340,350 1380,385 1425,430 1445,405")} />
          <path d="M505 395l12 5M218 405l10 5M1325 95v40M1025 215l40 8" strokeWidth="7" />
        </g>
        <Polygons groups={ISLANDS} fill="#f4f3e6" stroke="#dfeacb" strokeWidth="4" />
      </g>
      <polygon points="0,0 467,0 467,80 380,95 310,130 295,240 220,330 120,450 0,450" fill="url(#waves)" opacity=".65" />
      <rect x="467" y="3" width="200" height="45" fill="url(#waves)" opacity=".5" />
      <path d="M102.500 0V450M390.500 0V90M678.500 0V450M966.500 0V450M1254.500 0V450M0 247.500H1458" stroke="#c8d3dc" strokeWidth="1" opacity=".3" />
      <g filter="url(#coast)" fill="none" stroke="#e9a980" strokeLinecap="round">
        {Object.entries(ROADS).map(([sheet, list]) => (
          <g key={sheet} transform={SHEETS[sheet]} strokeWidth="4.400">
            {list.map((pts) => <path key={pts} d={curve(pts)} />)}
          </g>
        ))}
      </g>
      <g filter="url(#rough)" fill="none" stroke="#8f8ea8" strokeLinejoin="round" opacity=".9">
        {Object.entries(BORDERS).map(([sheet, list]) => (
          <g key={sheet} transform={SHEETS[sheet]}>
            {list.map(([w, pts]) => <polyline key={pts} points={pts} strokeWidth={w * 2.9} />)}
          </g>
        ))}
      </g>
      <g fontFamily="'Noto Sans', 'Open Sans', sans-serif" fontSize="15.500" fill="#484848" stroke="#fff" strokeOpacity=".75" strokeWidth="2.500" paintOrder="stroke">
        {CITIES.map(([name, x, y, w, cx, cy]) => (
          <React.Fragment key={name}>
            <circle cx={cx} cy={cy} r="1.800" fill="#ddd" stroke="#555" strokeOpacity="1" strokeWidth="1.200" paintOrder="normal" />
            <text x={x} y={y} textLength={w} lengthAdjust="spacingAndGlyphs">{name}</text>
          </React.Fragment>
        ))}
        <text x="350.700" y="294" textLength="82" lengthAdjust="spacingAndGlyphs" fontWeight="700" fill="#333">Nederland</text>
      </g>
      <rect x="467" y="3.500" width="524" height="443" fill="#3388ff" fillOpacity=".2" stroke="#3388ff" strokeWidth="3" strokeLinejoin="round" />
    </svg>
  );
}

/* ---------- logo ---------- */

const gearPath = () => {
  const ring = [];
  for (let i = 0; i < 8; i++) {
    [[-15, 16], [-8.500, 16.500], [-8, 21.500], [8, 21.500], [8.500, 16.500], [15, 16]].forEach(([deg, r]) => {
      const a = ((i * 45 + deg - 90) * Math.PI) / 180;
      ring.push(`${(22.5 + r * Math.cos(a)).toFixed(2)},${(22.5 + r * Math.sin(a)).toFixed(2)}`);
    });
  }
  return `M${ring.join("L")}Z`;
};

function Logo() {
  return (
    <svg width="170" height="46" viewBox="0 0 170 46">
      <path d={gearPath()} fill="none" stroke="#3b7bab" strokeWidth="1.300" strokeLinejoin="round" />
      <path d="M22.500 35.500C18.500 29.500 14.200 25 14.200 20.500a8.300 8.300 0 0 1 16.600 0C30.800 25 26.500 29.500 22.500 35.500Z" fill="none" stroke="#444" strokeWidth="1.100" />
      <circle cx="22.500" cy="21" r="4.200" fill="none" stroke="#444" strokeWidth="1.100" />
      <g fontFamily="'DejaVu Serif', serif" fontSize="29" strokeWidth=".5">
        <text x="45.500" y="29" textLength="33" lengthAdjust="spacingAndGlyphs" fill="#306998" stroke="#306998">py</text>
        <text x="77.500" y="29" textLength="91" lengthAdjust="spacingAndGlyphs" fill="#3b3b3b" stroke="#3b3b3b">geoapi</text>
      </g>
    </svg>
  );
}

function ShareIcon() {
  return (
    <svg width="22" height="20" viewBox="0 0 22 20" fill="none" stroke="currentColor" strokeWidth="1.400">
      <path d="M1.700 5v12.300H15.800V14" />
      <path d="M5.500 13.200C6 8.500 9 5.800 13.700 5.500V1.700L19.500 7.300L13.700 12.500V9C10 9 7.500 10.300 5.500 13.200Z" strokeLinejoin="round" />
    </svg>
  );
}

export default function App() {
  return (
    <>
      <GlobalStyle />
      <Toolbar>
        <NavButton><MdArrowBack size={25} /></NavButton>
        <NavButton $disabled><MdArrowForward size={25} /></NavButton>
        <NavButton><MdRefresh size={26} /></NavButton>
        <AddressBar>
          <MdInfoOutline size={20} />
          <Url><b>localhost</b>:5000/collections/NSG</Url>
          <BarIcon><MdZoomOut size={23} /></BarIcon>
          <BarIcon $gap={18}><ShareIcon /></BarIcon>
          <BarIcon $gap={18}><MdStarBorder size={22} /></BarIcon>
        </AddressBar>
      </Toolbar>

      <Header>
        <Container $row $fill $pad="0 18px 0 0">
          <Logo />
          <ContactLink>Contact</ContactLink>
        </Container>
      </Header>
      <CrumbBar>
        <Container $row $fill $pad="0 7px 0 6px">
          <Crumbs><span>Home</span><span>/</span><span>Collections</span><span>/</span><span>NSG</span></Crumbs>
          <Formats><span>json</span><span>jsonld</span></Formats>
        </Container>
      </CrumbBar>

      <Container>
        <Title>NSG</Title>
        <Description>Protected areas of nature conservation</Description>
        <Badge>Protected Areas</Badge>
        <MapFrame>
          <RegionMap />
          <ZoomControl>
            <ZoomKey><svg width="14" height="14" viewBox="0 0 14 14"><path d="M0 7H14M7 .5V13.500" stroke="#000" strokeWidth="2.200" /></svg></ZoomKey>
            <ZoomKey><svg width="14" height="14" viewBox="0 0 14 14"><path d="M0 7H14" stroke="#000" strokeWidth="2.200" /></svg></ZoomKey>
          </ZoomControl>
          <Attribution>
            <a>Leaflet</a> | <a>Wikimedia maps</a> | Map data © <a>OpenStreetMap contributors</a>
          </Attribution>
        </MapFrame>
        <Heading $top={0}>Browse</Heading>
        <LinkList><li><ItemLink>Browse through the items of "NSG"</ItemLink></li></LinkList>
        <Heading $top={18}>Queryables</Heading>
        <LinkList><li><ItemLink>Display Queryables of "NSG"</ItemLink></li></LinkList>
      </Container>
    </>
  );
}
